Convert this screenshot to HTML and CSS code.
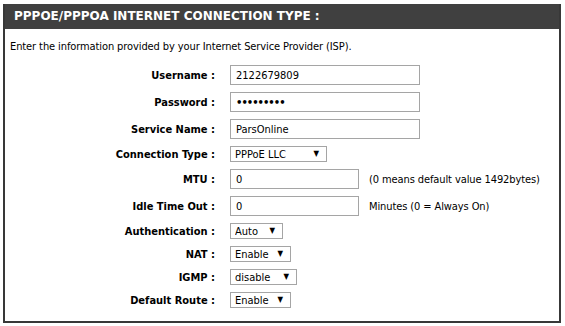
FILE: index.html
```html
<!DOCTYPE html>
<html lang="en">
<head>
    <meta charset="UTF-8">
    <title>PPPoE/PPPoA Internet Connection Type</title>
    <link rel="stylesheet" href="styles.css">
</head>
<body>
    <div class="box">
        <h2 class="box-title">PPPOE/PPPOA INTERNET CONNECTION TYPE :</h2>
        <p class="intro">Enter the information provided by your Internet Service Provider (ISP).</p>

        <form class="settings">
            <label class="label" for="username">Username :</label>
            <div class="field"><input class="text" id="username" type="text" value="2122679809"></div>

            <label class="label" for="password">Password :</label>
            <div class="field"><input class="text pass" id="password" type="password" value="123456789"></div>

            <label class="label" for="service">Service Name :</label>
            <div class="field"><input class="text" id="service" type="text" value="ParsOnline"></div>

            <label class="label" for="conntype">Connection Type :</label>
            <div class="field">
                <span class="select w-conn"><select id="conntype"><option>PPPoE LLC</option></select></span>
            </div>

            <label class="label" for="mtu">MTU :</label>
            <div class="field">
                <input class="text short" id="mtu" type="text" value="0">
                <span class="hint">(0 means default value 1492bytes)</span>
            </div>

            <label class="label" for="idle">Idle Time Out :</label>
            <div class="field">
                <input class="text short" id="idle" type="text" value="0">
                <span class="hint">Minutes (0 = Always On)</span>
            </div>

            <label class="label" for="auth">Authentication :</label>
            <div class="field">
                <span class="select w-auth"><select id="auth"><option>Auto</option></select></span>
            </div>

            <label class="label" for="nat">NAT :</label>
            <div class="field">
                <span class="select w-nat"><select id="nat"><option>Enable</option></select></span>
            </div>

            <label class="label" for="igmp">IGMP :</label>
            <div class="field">
                <span class="select w-igmp"><select id="igmp"><option>disable</option></select></span>
            </div>

            <label class="label" for="route">Default Route :</label>
            <div class="field">
                <span class="select w-nat"><select id="route"><option>Enable</option></select></span>
            </div>
        </form>
    </div>
</body>
</html>
```

FILE: styles.css
```css
/* Reset */
* {
    margin: 0;
    padding: 0;
    box-sizing: border-box;
}

body {
    background: #ffffff;
    font-family: 'DejaVu Sans Condensed', 'DejaVu Sans', sans-serif;
    font-size: 11px;
    color: #000000;
}

/* Outer panel */
.box {
    width: 558px;
    margin: 4px 0 0 3px;
    border: 2px solid #383838;
    border-top: none;
    padding-bottom: 13px;
}

.box-title {
    height: 25px;
    padding-left: 9px;
    background: #404040;
    color: #ffffff;
    font-family: 'DejaVu Sans', sans-serif;
    font-size: 12px;
    font-weight: bold;
    line-height: 25px;
}

.intro {
    padding: 11px 0 0 5px;
    line-height: 14px;
    letter-spacing: -0.1px;
}

/* Settings grid */
.settings {
    display: grid;
    grid-template-columns: 210px 1fr;
    column-gap: 15px;
    row-gap: 7px;
    align-items: center;
    margin-top: 11px;
}

.label {
    text-align: right;
    font-weight: bold;
    font-size: 11px;
}

.field {
    display: flex;
    align-items: center;
}

.text {
    width: 190px;
    height: 20px;
    border: 1px solid #a5a5a5;
    padding: 0 5px;
    font-family: inherit;
    font-size: 11px;
    color: #000000;
    outline: none;
}

.text.pass {
    font-family: 'DejaVu Sans', sans-serif;
    font-size: 10px;
    font-weight: bold;
    letter-spacing: -1px;
}

.text.short {
    width: 129px;
}

.hint {
    margin-left: 10px;
    letter-spacing: -0.1px;
}

/* Select boxes */
.select {
    position: relative;
    display: inline-block;
    height: 16px;
}

.select select {
    appearance: none;
    -webkit-appearance: none;
    width: 100%;
    height: 16px;
    border: 1px solid #a5a5a5;
    background: #ffffff;
    padding: 0 0 0 4px;
    font-family: inherit;
    font-size: 11px;
    color: #000000;
    outline: none;
}

.select::after {
    content: "\25BC";
    position: absolute;
    right: 8px;
    top: 1px;
    font-size: 8px;
    line-height: 14px;
    pointer-events: none;
}

.w-conn { width: 97px; }
.w-auth { width: 53px; }
.w-nat { width: 61px; }
.w-igmp { width: 67px; }
```
